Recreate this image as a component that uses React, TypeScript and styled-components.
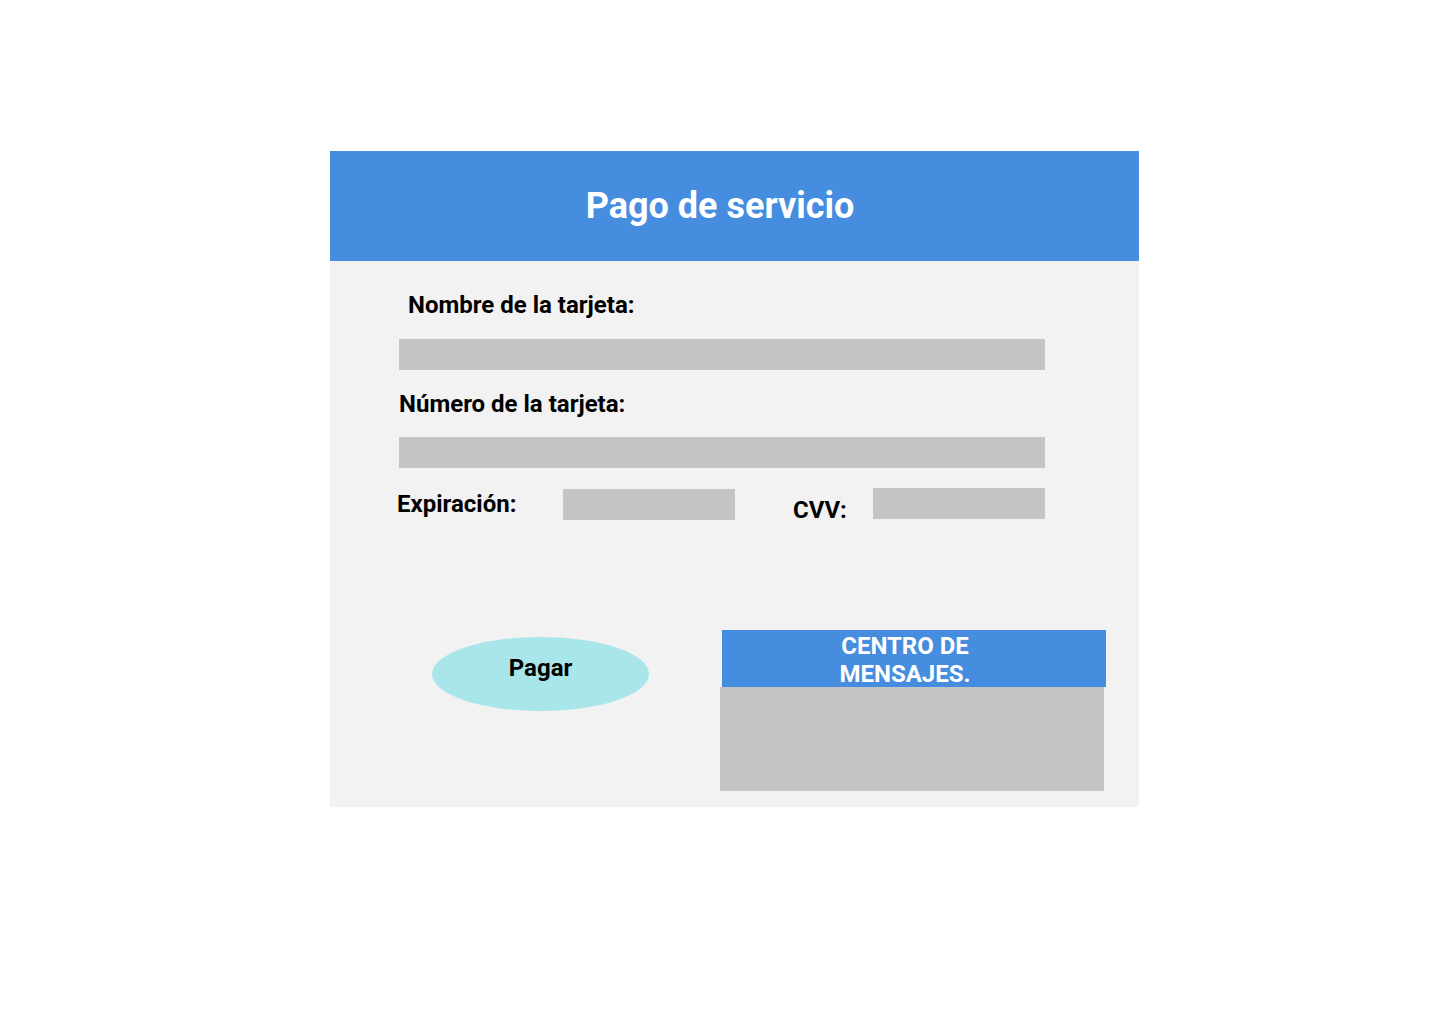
import React from "react";
import styled, { createGlobalStyle } from "styled-components";

const GlobalStyle = createGlobalStyle`
  html, body {
    margin: 0;
    padding: 0;
    background: #ffffff;
    font-family: Roboto, "Liberation Sans", Arial, sans-serif;
  }
`;

const Page = styled.div`
  width: 1440px;
  min-height: 1024px;
  padding-top: 151px;
  padding-left: 330px;
  box-sizing: border-box;
`;

const Card = styled.div`
  width: 809px;
  display: flex;
  flex-direction: column;
`;

const Header = styled.header`
  height: 110px;
  background: #468de0;
  display: flex;
  align-items: center;
  justify-content: center;
  padding-right: 29px;
`;

const Title = styled.h1`
  margin: 0;
  font-size: 36px;
  line-height: 42px;
  font-weight: 700;
  color: #ffffff;
`;

const Body = styled.div`
  background: #f2f2f2;
  padding: 30px 0 16px;
  display: flex;
  flex-direction: column;
`;

const Form = styled.div`
  padding-left: 69px;
  display: flex;
  flex-direction: column;
`;

const Label = styled.label<{ $offset?: number; $top?: number; $width?: number }>`
  display: block;
  font-size: 24px;
  line-height: 28px;
  font-weight: 700;
  color: #000000;
  margin-left: ${(p) => p.$offset ?? 0}px;
  margin-top: ${(p) => p.$top ?? 0}px;
  ${(p) => (p.$width ? `width: ${p.$width}px; flex-shrink: 0;` : "")}
`;

const Input = styled.div<{ $top?: number; $width?: number }>`
  height: 31px;
  width: ${(p) => p.$width ?? 646}px;
  background: #c4c4c4;
  margin-top: ${(p) => p.$top ?? 0}px;
  flex-shrink: 0;
`;

const Row = styled.div`
  display: flex;
  align-items: flex-start;
  margin-top: 20px;
`;

const Actions = styled.div`
  display: flex;
  align-items: flex-start;
  margin-top: 106px;
  padding-left: 102px;
`;

const PayButton = styled.button`
  width: 217px;
  height: 74px;
  margin-top: 7px;
  border: none;
  border-radius: 50%;
  background: #a8e6e9;
  padding: 17px 0 0;
  display: flex;
  justify-content: center;
  align-items: flex-start;
  font-family: inherit;
  font-size: 24px;
  line-height: 28px;
  font-weight: 700;
  color: #000000;
`;

const Messages = styled.section`
  width: 384px;
  margin-left: 71px;
  display: flex;
  flex-direction: column;
`;

const MessagesHeader = styled.div`
  height: 57px;
  width: 384px;
  margin-left: 2px;
  box-sizing: border-box;
  padding: 2px 18px 0 0;
  background: #468de0;
  color: #ffffff;
  text-align: center;
  font-size: 24px;
  line-height: 28px;
  font-weight: 700;
`;

const MessagesBox = styled.div`
  height: 104px;
  background: #c4c4c4;
`;

export default function App() {
  return (
    <>
      <GlobalStyle />
      <Page>
        <Card>
          <Header>
            <Title>Pago de servicio</Title>
          </Header>
          <Body>
            <Form>
              <Label $offset={9}>Nombre de la tarjeta:</Label>
              <Input $top={20} />
              <Label $top={20}>Número de la tarjeta:</Label>
              <Input $top={19} />
              <Row>
                <Label $offset={-2} $top={2} $width={166}>
                  Expiración:
                </Label>
                <Input $top={1} $width={172} />
                <Label $offset={58} $top={8} $width={80}>
                  CVV:
                </Label>
                <Input $width={172} />
              </Row>
            </Form>
            <Actions>
              <PayButton>Pagar</PayButton>
              <Messages>
                <MessagesHeader>
                  CENTRO DE
                  <br />
                  MENSAJES.
                </MessagesHeader>
                <MessagesBox />
              </Messages>
            </Actions>
          </Body>
        </Card>
      </Page>
    </>
  );
}
